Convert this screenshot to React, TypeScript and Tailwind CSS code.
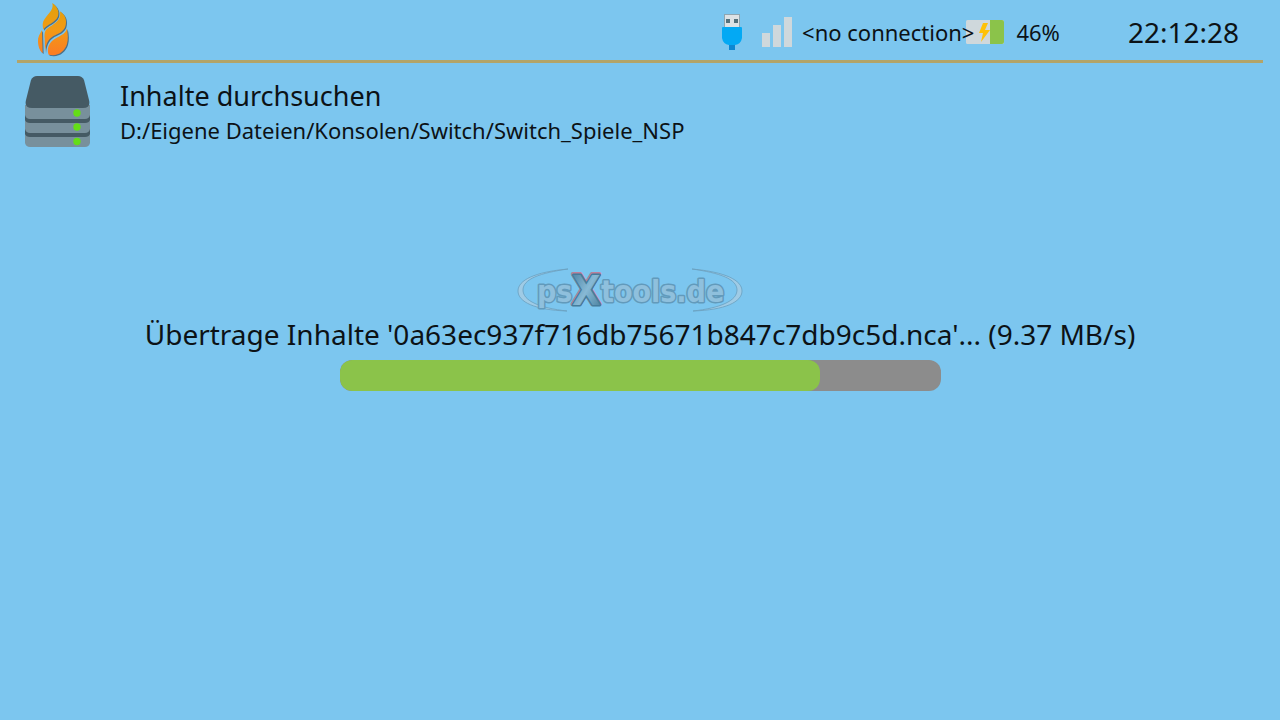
import type { ReactNode } from "react";

const CONTENT_PATH = "D:/Eigene Dateien/Konsolen/Switch/Switch_Spiele_NSP";

function FlameLogo() {
  return (
    <svg viewBox="80 6 99 168" className="h-14 w-[33px]" aria-hidden="true">
      <defs>
        <linearGradient id="flame" x1="0" y1="10" x2="0" y2="170" gradientUnits="userSpaceOnUse">
          <stop offset="0" stopColor="#e0a10c" />
          <stop offset="0.5" stopColor="#f39a14" />
          <stop offset="1" stopColor="#fb7a26" />
        </linearGradient>
        <g id="flame-parts">
          <path d="M126 9C132 32 108 44 99 64C95 75 98 82 99 89C109 74 136 68 143 49C148 33 140 19 126 9Z" />
          <path d="M149 34C154 63 127 74 112 85C102 92 102 104 103 116L104 158C106 127 117 113 136 105C157 96 167 86 167 66C167 50 159 41 149 34Z" />
          <path d="M169 84C169 105 139 109 125 123C113 135 110 150 115 164C142 170 162 156 170 132C174 118 173 102 169 84Z" />
          <path d="M95 90C88 102 82 112 83 125C84 142 89 152 97 159Z" />
        </g>
      </defs>
      <use href="#flame-parts" fill="#4b7089" transform="translate(3 3)" />
      <use href="#flame-parts" fill="url(#flame)" />
    </svg>
  );
}

function UsbIcon() {
  return (
    <svg viewBox="0 0 20 36" className="h-9 w-5" aria-hidden="true">
      <rect x="2.5" y="0.5" width="15" height="13" fill="#dde2e5" stroke="#8fa5b0" />
      <path d="M4 5h4v4H4zM12 5h4v4h-4z" fill="#54717c" />
      <path d="M7 29h6v7H7z" fill="#0b87d2" />
      <path d="M0 14q0-1 1-1h18q1 0 1 1v10q-1 6-7 7H7q-6-1-7-7z" fill="#03a9f4" />
    </svg>
  );
}

function SignalIcon() {
  return (
    <svg viewBox="0 0 30 30" className="h-[30px] w-[30px]" aria-hidden="true">
      <path d="M0 16h8v14H0zM11 8h8v22h-8zM22 0h8v30h-8z" fill="#cfd8dc" />
    </svg>
  );
}

function BatteryIcon() {
  return (
    <svg viewBox="0 0 38 24" className="h-6 w-[38px]" aria-hidden="true">
      <rect width="38" height="24" rx="1.5" fill="#cfd8dc" />
      <path d="M24 0h12q2 0 2 2v20q0 2-2 2H24z" fill="#8bc34a" />
      <path d="M17 3L13 13h4l-2 9 9-12h-5l3-7z" fill="#ffc107" />
    </svg>
  );
}

function DriveIcon() {
  return (
    <svg viewBox="0 0 66 73" className="h-[73px] w-[66px]" aria-hidden="true">
      <path d="M1 30h65v38H1z" fill="#455a64" />
      <path d="M1 30h65v10q-1 4-5 4H6q-4 0-5-4z" fill="#78909c" />
      <path d="M1 45q1 3 5 3h55q4 0 5-3v9q-1 4-5 4H6q-4 0-5-4z" fill="#78909c" />
      <path d="M1 59q1 3 5 3h55q4 0 5-3v9q-1 4-5 4H6q-4 0-5-4z" fill="#78909c" />
      <path d="M7 5Q9 1 13 1h41q4 0 6 4l5 20q2 8-6 8H8q-8 0-6-8z" fill="#455a64" />
      <g fill="#64dd17">
        <circle cx="53" cy="38" r="3.7" />
        <circle cx="53" cy="52" r="3.7" />
        <circle cx="53" cy="66.500" r="3.7" />
      </g>
    </svg>
  );
}

function Watermark() {
  return (
    <svg viewBox="0 -5 226 53" className="h-[53px] w-[226px]" role="img" aria-label="psXtools.de">
      <defs>
        <linearGradient id="cross" x1="0" y1="0" x2="1" y2="1">
          <stop offset="0" stopColor="#467d9f" />
          <stop offset="0.5" stopColor="#87b9d5" />
          <stop offset="1" stopColor="#417896" />
        </linearGradient>
      </defs>
      <g fill="#9fcbe5" stroke="#6a9fbf" strokeWidth="0.8">
        <path d="M51 1C18 4 1 12 1 23s17 19 49 20C23 40 6 33 6 22S23 5 51 1Z" />
        <path d="M175 1c33 3 50 11 50 22s-17 19-49 20c27-3 44-10 44-21S203 5 175 1Z" />
      </g>
      <g
        fontFamily="'DejaVu Sans Condensed', 'DejaVu Sans', sans-serif"
        fontWeight="bold"
        strokeLinejoin="round"
        paintOrder="stroke"
      >
        <g fontSize="30" fill="#8fc0dd" stroke="#629abb" strokeWidth="3">
          <text x="20" y="34">ps</text>
          <text x="84" y="34">tools.de</text>
        </g>
        <text x="55" y="36" fontSize="41" fill="none" stroke="#bd7f99" strokeWidth="4">X</text>
        <text x="55" y="37" fontSize="41" fill="url(#cross)" stroke="#457c9b" strokeWidth="3">X</text>
      </g>
    </svg>
  );
}

function StatusText({ children }: { children: ReactNode }) {
  return <span className="relative text-[22px] leading-8 whitespace-nowrap">{children}</span>;
}

function ProgressBar({ percent }: { percent: number }) {
  return (
    <div
      role="progressbar"
      aria-label="Übertragung"
      aria-valuenow={percent}
      aria-valuemin={0}
      aria-valuemax={100}
      className="h-[31px] w-full max-w-[601px] overflow-hidden rounded-xl bg-[#8c8c8c]"
    >
      <div className="h-full rounded-xl bg-[#8bc34a]" style={{ width: `${percent}%` }} />
    </div>
  );
}

export default function App() {
  return (
    <div className="flex min-h-screen flex-col bg-[#7cc6ef] font-['Noto_Sans',sans-serif] text-[#0c1216]">
      <header className="mx-[17px] flex h-[63px] items-center justify-between border-b-3 border-[#b3a468] pr-6 pl-5">
        <FlameLogo />
        <div className="flex items-center pt-1">
          <UsbIcon />
          <div className="ml-5 flex items-center gap-2.5">
            <SignalIcon />
            <StatusText>{"<no connection>"}</StatusText>
          </div>
          <div className="-ml-2 flex items-center gap-3">
            <BatteryIcon />
            <StatusText>46%</StatusText>
          </div>
          <time className="ml-17 text-[28px] leading-8">22:12:28</time>
        </div>
      </header>

      <section className="flex items-center gap-[30px] px-6 pt-3">
        <DriveIcon />
        <div>
          <h1 className="text-[27px] leading-9">Inhalte durchsuchen</h1>
          <p className="text-[22px] leading-8">{CONTENT_PATH}</p>
        </div>
      </section>

      <main className="flex flex-col items-center px-6 pt-[115px]">
        <div className="pr-5">
          <Watermark />
        </div>
        <p className="mb-2 text-center text-[28px] leading-9">
          Übertrage Inhalte '0a63ec937f716db75671b847c7db9c5d.nca'... (9.37 MB/s)
        </p>
        <ProgressBar percent={80} />
      </main>
    </div>
  );
}
